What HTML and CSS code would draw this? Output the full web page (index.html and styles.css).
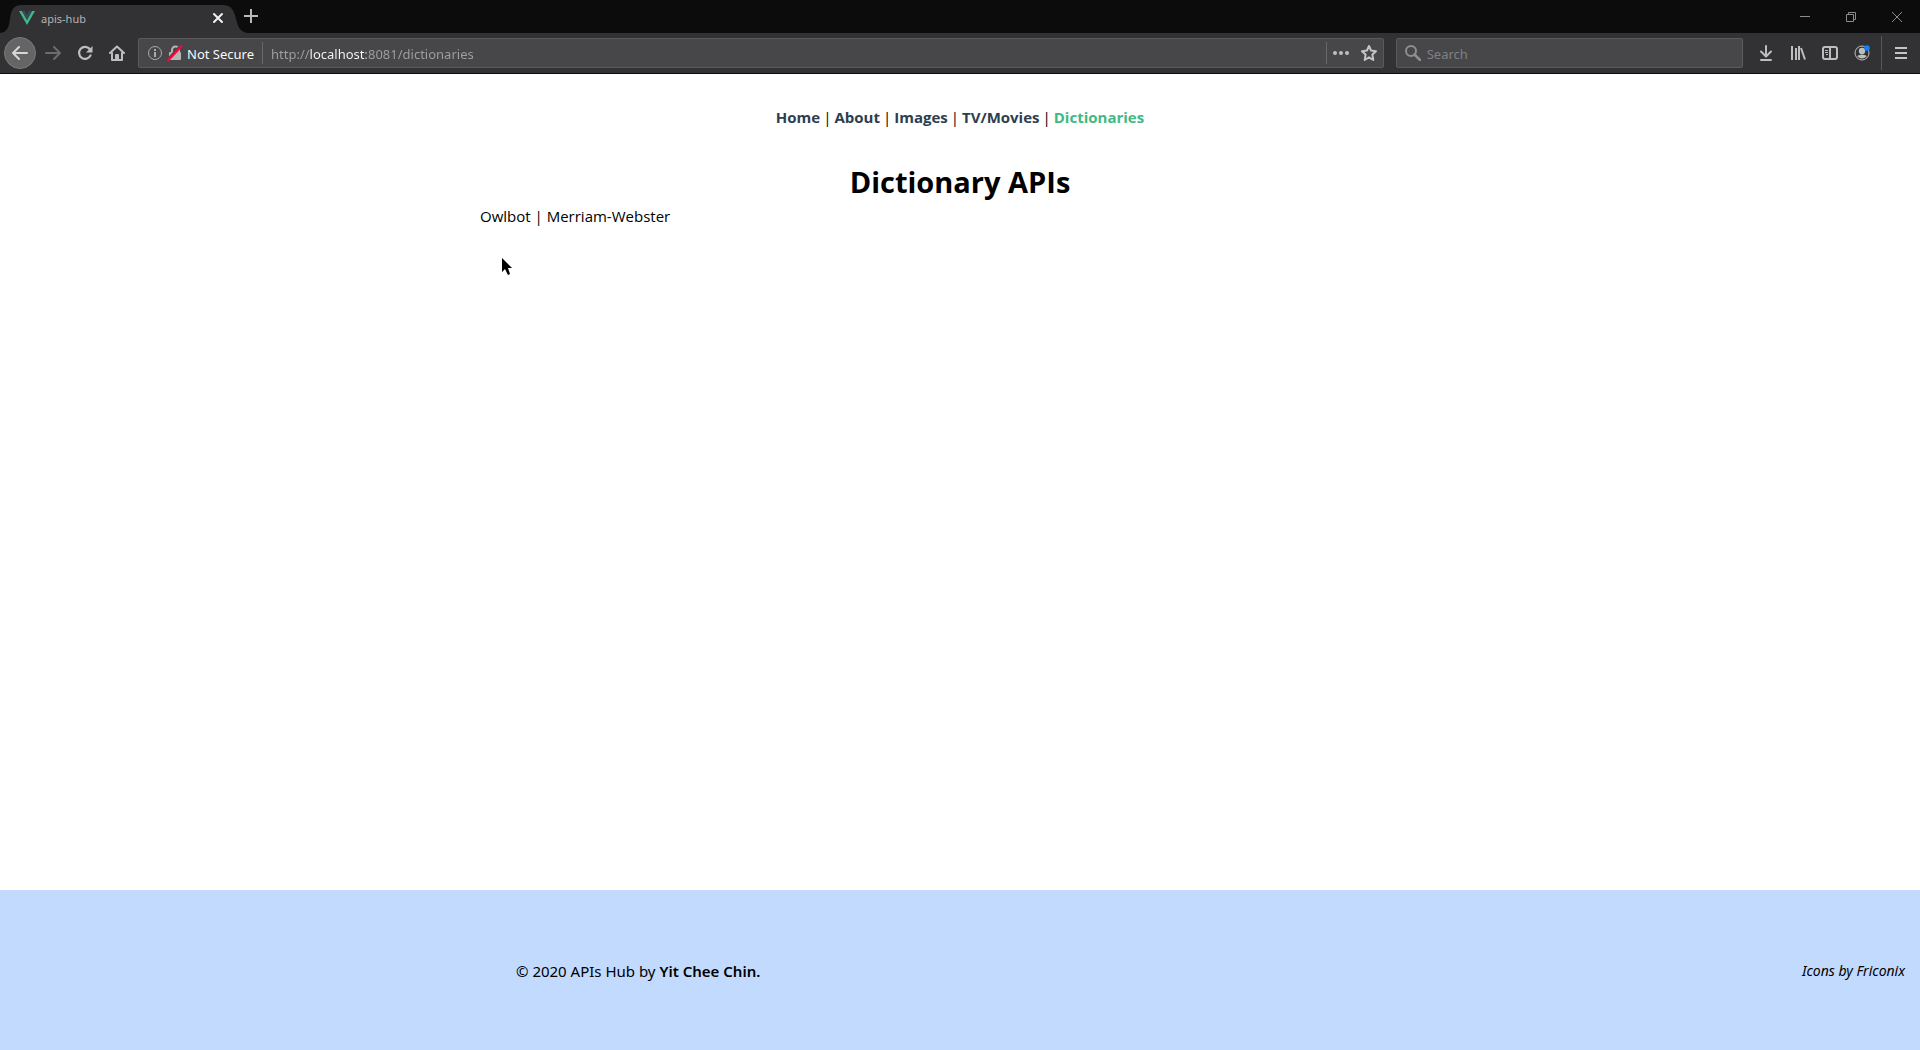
FILE: index.html
```html
<!DOCTYPE html>
<html lang="en">
<head>
<meta charset="utf-8">
<title>apis-hub</title>
<link rel="stylesheet" href="styles.css">
</head>
<body>
<header class="browser">
  <div class="tabbar">
    <div class="tab">
      <svg class="tab-shape" width="248" height="28" viewBox="0 0 248 28"><path d="M0 28C8 27 9 21 10 14C11 6 13 0 22 0H222C232 0 234 6 236 14C238 22 240 27 248 28Z" fill="#323234"/></svg>
      <svg class="favicon" width="16" height="16" viewBox="0 0 16 16"><path d="M0 0H3L8 9L13 0H16L8 14Z" fill="#41b883"/><path d="M3 0H6L8 4L10 0H13L8 9Z" fill="#34495e"/></svg>
      <span class="tab-title">apis-hub</span>
      <button class="plain" aria-label="Close tab"><svg width="16" height="16" viewBox="0 0 16 16"><path d="M4 3L12 11M12 3L4 11" stroke="#f2f2f2" stroke-width="2" stroke-linecap="round"/></svg></button>
    </div>
    <button class="plain new-tab" aria-label="New tab"><svg width="16" height="16" viewBox="0 0 16 16"><path d="M8 0V14M1 7H15" stroke="#b9b9ba" stroke-width="2"/></svg></button>
    <div class="window-controls">
      <button class="plain" aria-label="Minimize"><svg width="12" height="12" viewBox="0 0 12 12"><path d="M1 5.500H11" stroke="#8c8c8c"/></svg></button>
      <button class="plain" aria-label="Restore"><svg width="12" height="12" viewBox="0 0 12 12" fill="none" stroke="#8c8c8c"><path d="M1.500 3.500H8.500V10.500H1.500ZM3.500 3V1.500H10.500V8.500H9"/></svg></button>
      <button class="plain" aria-label="Close window"><svg width="12" height="12" viewBox="0 0 12 12"><path d="M1 1L11 11M11 1L1 11" stroke="#8c8c8c"/></svg></button>
    </div>
  </div>
  <div class="toolbar">
    <div class="tools">
      <button class="plain back" aria-label="Back"><svg width="16" height="16" viewBox="0 0 16 16" fill="none" stroke="#d8d8d8" stroke-width="2" stroke-linecap="round" stroke-linejoin="round"><path d="M15 8H1M7 2L1 8L7 14"/></svg></button>
      <button class="plain" aria-label="Forward"><svg width="16" height="16" viewBox="0 0 16 16" fill="none" stroke="#6c6c6e" stroke-width="2" stroke-linecap="round" stroke-linejoin="round"><path d="M1 8H15M9 2L15 8L9 14"/></svg></button>
      <button class="plain" aria-label="Reload"><svg width="16" height="16" viewBox="0 0 16 16"><path d="M12.700 4A6 6 0 1 0 13.500 10.500" fill="none" stroke="#bebebf" stroke-width="2.200" stroke-linecap="round"/><path d="M15.500 1V7.500H9Z" fill="#bebebf"/></svg></button>
      <button class="plain" aria-label="Home"><svg width="16" height="16" viewBox="0 0 16 16" fill="none" stroke="#bebebf" stroke-width="2" stroke-linecap="round" stroke-linejoin="round"><path d="M1 8L8 1.500L15 8M3 8V15H13V8"/><path d="M7 15V10H9V15" stroke-linecap="butt"/></svg></button>
    </div>
    <div class="address">
      <svg width="16" height="16" viewBox="0 0 16 16" fill="none" stroke="#aaa"><circle cx="8" cy="8" r="6.500"/><path d="M8 7V12M8 4V6" stroke-width="2"/></svg>
      <svg class="lock" width="16" height="16" viewBox="0 0 16 16"><path d="M5 8V5A3.500 3.500 0 0 1 12 5V8" fill="none" stroke="#b5b5b6" stroke-width="2"/><rect x="2" y="7" width="12" height="8" rx="1" fill="#b5b5b6"/><path d="M2 13L12 2" stroke="#47474a" stroke-width="2"/><path d="M1.500 15L14 1.500" stroke="#f00a3c" stroke-width="2.500" stroke-linecap="round"/></svg>
      <label class="secure" for="url">Not Secure</label>
      <span class="divider"></span>
      <input class="url" id="url" type="text" value="http://localhost:8081/dictionaries">
      <span class="divider tall"></span>
      <button class="plain page-action" aria-label="Page actions"><svg width="16" height="16" viewBox="0 0 16 16" fill="#bebebf"><circle cx="2" cy="8" r="2"/><circle cx="8" cy="8" r="2"/><circle cx="14" cy="8" r="2"/></svg></button>
      <button class="plain page-action" aria-label="Bookmark this page"><svg width="16" height="16" viewBox="0 0 16 16" fill="none" stroke="#c4c4c5" stroke-width="2" stroke-linejoin="round"><path d="M8 1L10.100 5.600L15 6.200L11.400 9.600L12.300 15L8 12.300L3.700 15L4.600 9.600L1 6.200L5.900 5.600Z"/></svg></button>
    </div>
    <div class="search">
      <svg width="16" height="16" viewBox="0 0 16 16" fill="none" stroke="#8f8f91" stroke-width="2"><circle cx="6" cy="6" r="5"/><path d="M9.500 9.500L15 15" stroke-width="2.500" stroke-linecap="round"/></svg>
      <input class="search-input" type="text" placeholder="Search" aria-label="Search">
    </div>
    <div class="tools">
      <button class="plain" aria-label="Downloads"><svg width="16" height="16" viewBox="0 0 16 16" fill="none" stroke="#bebebf" stroke-width="2" stroke-linecap="round" stroke-linejoin="round"><path d="M8 1V11M3 6.500L8 11.500L13 6.500M3 15H13"/></svg></button>
      <button class="plain" aria-label="Library"><svg width="16" height="16" viewBox="0 0 16 16" fill="none" stroke="#bebebf" stroke-width="2"><path d="M2 1V15M6 3V15M9 1V15M11 3L15 14.500"/></svg></button>
      <button class="plain" aria-label="Sidebars"><svg width="16" height="16" viewBox="0 0 16 16" fill="none" stroke="#bebebf"><rect x="1" y="2" width="14" height="12" rx="2" stroke-width="2"/><path d="M8 2V14" stroke-width="2"/><path d="M3 5.500H6M3 7.500H6M4 9.500H6"/></svg></button>
      <button class="plain" aria-label="Account"><svg width="16" height="16" viewBox="0 0 16 16"><circle cx="8" cy="8" r="7" fill="none" stroke="#bebebf"/><circle cx="8" cy="6" r="3.200" fill="#bebebf"/><path d="M3 11Q8 8 13 11Q8 16 3 11" fill="#bebebf"/><circle cx="13" cy="3" r="2.800" fill="#0a84ff"/></svg></button>
    </div>
    <span class="menu-divider"></span>
    <button class="plain menu" aria-label="Open menu"><svg width="12" height="14" viewBox="0 0 12 14"><path d="M0 2H12M0 7H12M0 12H12" stroke="#c4c4c5" stroke-width="2"/></svg></button>
  </div>
</header>
<div class="page">
  <nav class="nav">
    <a href="#home">Home</a> | <a href="#about">About</a> | <a href="#images">Images</a> | <a href="#tv-movies">TV/Movies</a> | <a class="active" href="#dictionaries">Dictionaries</a>
  </nav>
  <main class="content">
    <h1 class="title">Dictionary APIs</h1>
    <div class="links">
      <a href="#owlbot">Owlbot</a> | <a href="#merriam-webster">Merriam-Webster</a>
      <svg class="cursor" width="12" height="18" viewBox="0 0 12 18"><path d="M0 0V14L3 11L6 17L8 16L6 10H10Z"/></svg>
    </div>
  </main>
  <footer class="footer">
    <p class="copyright">© 2020 APIs Hub by <a href="#author">Yit Chee Chin.</a></p>
    <a class="credit" href="#friconix">Icons by Friconix</a>
  </footer>
</div>
</body>
</html>
```
FILE: styles.css
```css
* {
  box-sizing: border-box;
}

body {
  display: flex;
  flex-direction: column;
  min-height: 100vh;
  margin: 0;
  background: #fff;
  color: #000;
  font: 15px/20px "Open Sans", "Noto Sans", sans-serif;
}

a {
  color: inherit;
  text-decoration: none;
}

svg {
  display: block;
  flex: none;
}

.plain {
  display: flex;
  align-items: center;
  justify-content: center;
  flex: none;
  padding: 0;
  border: 0;
  background: none;
}

.browser {
  font-family: "Noto Sans", sans-serif;
  font-size: 13px;
}

.tabbar {
  display: flex;
  height: 33px;
  background: #0c0c0d;
}

.tab {
  position: relative;
  display: flex;
  align-items: center;
  width: 242px;
  height: 28px;
  margin-top: 5px;
  padding: 0 16px 0 19px;
  color: #b4b4b5;
  font-size: 11px;
}

.tab-shape {
  position: absolute;
  left: 0;
  top: 0;
}

.favicon,
.tab-title,
.tab .plain {
  position: relative;
}

.tab-title {
  flex: 1;
  margin-left: 6px;
}

.new-tab {
  width: 18px;
}

.window-controls {
  display: flex;
  margin-left: auto;
}

.window-controls .plain {
  width: 46px;
}

.toolbar {
  display: flex;
  align-items: center;
  height: 41px;
  padding: 0 3px 0 4px;
  border-bottom: 1px solid #0c0c0d;
  background: #323234;
}

.tools {
  display: flex;
}

.tools .plain {
  width: 32px;
  height: 32px;
}

.tools .back {
  margin-right: 1px;
  border: 1px solid #7a7a7c;
  border-radius: 50%;
  background: #656566;
}

.address,
.search {
  display: flex;
  align-items: center;
  height: 30px;
  border: 1px solid #5a5a5d;
  border-radius: 2px;
  background: #474749;
}

.address {
  flex: 1;
  margin: 0 12px 0 5px;
  padding: 0 0 0 8px;
}

.lock {
  margin: 0 4px;
}

.secure {
  padding-top: 1px;
  color: #f9f9fa;
}

.divider {
  width: 1px;
  height: 22px;
  margin: 0 8px;
  background: #68686b;
}

.tall {
  margin: 0;
}

.url,
.search-input {
  flex: 1;
  min-width: 0;
  padding: 1px 0 0;
  border: 0;
  outline: 0;
  background: none;
  font: inherit;
}

.url {
  background: linear-gradient(to right, #a0a0a2 39px, #f9f9fa 39px, #f9f9fa 95px, #a0a0a2 95px);
  background-clip: text;
  -webkit-background-clip: text;
  color: transparent;
}

.page-action {
  width: 28px;
}

.search {
  flex: none;
  width: calc(18% + 3px);
  margin-right: 7px;
  padding: 0 8px;
  gap: 6px;
}

.search-input::placeholder {
  color: #808083;
  opacity: 1;
}

.menu-divider {
  width: 1px;
  height: 34px;
  margin-left: 3px;
  background: #58585b;
}

.menu {
  width: 32px;
  height: 32px;
  margin-left: 3px;
}

.page {
  display: flex;
  flex: 1;
  flex-direction: column;
}

.nav {
  display: flex;
  flex-wrap: wrap;
  justify-content: center;
  gap: 3px;
  padding: 33px 0;
}

.nav a {
  color: #2c3e50;
  font-weight: 700;
}

.nav .active {
  color: #42b983;
}

.content {
  flex: 1;
  width: 50%;
  margin: 0 auto;
}

.title {
  margin: 0;
  padding-top: 2px;
  font-size: 29px;
  line-height: 40px;
  text-align: center;
}

.links {
  position: relative;
  margin-top: 4px;
}

.cursor {
  position: absolute;
  left: 22px;
  top: 52px;
}

.footer {
  display: flex;
  align-items: center;
  justify-content: space-between;
  height: 160px;
  padding: 2px 15px 0 calc(25% + 36px);
  background: #c3daff;
  font-family: "Noto Sans", sans-serif;
}

.copyright {
  margin: 0;
}

.copyright a {
  font-weight: 600;
}

.credit {
  font-size: 14px;
  font-style: italic;
}
```
